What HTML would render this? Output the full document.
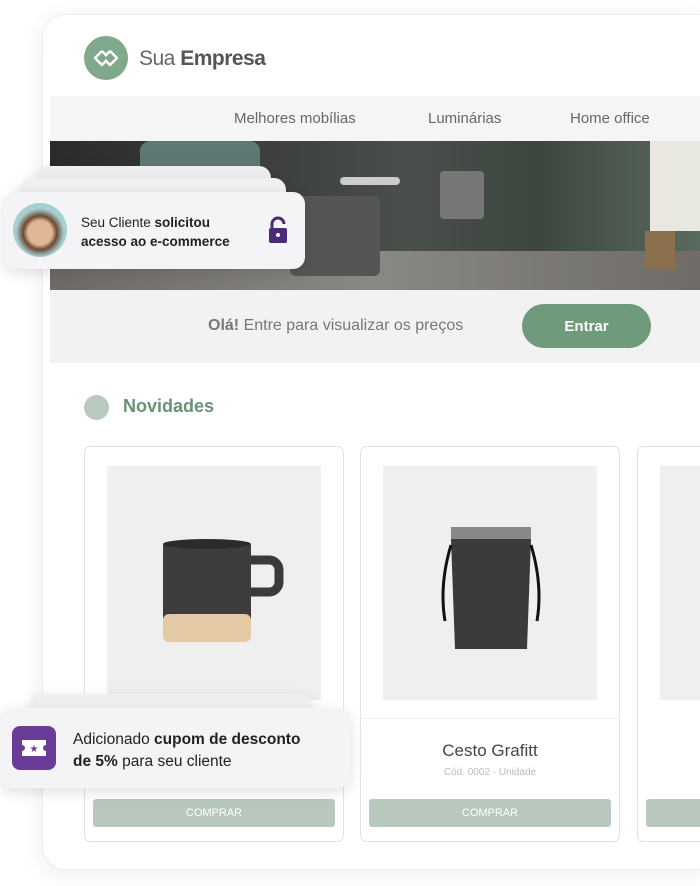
<!DOCTYPE html>
<html><head><meta charset="utf-8"><style>
*{margin:0;padding:0;box-sizing:border-box}
html,body{width:700px;height:886px;overflow:hidden}
body{background:#fff;font-family:"Liberation Sans",sans-serif}
#w{position:relative;width:700px;height:886px;overflow:hidden}
.abs{position:absolute}
.card{position:absolute;top:446px;width:260px;height:396px;border:1px solid #e3e3e3;border-radius:6px;background:#fff}
.img{position:absolute;left:22px;top:19px;width:214px;height:234px;background:#efefef}
.btn{position:absolute;left:8px;top:352px;width:242px;height:28px;background:#b8c8bc;border-radius:3px;color:#fff;font-size:11px;text-align:center;line-height:28px}
.notif{position:absolute;background:#f4f4f6;border-radius:12px;box-shadow:0 4px 14px rgba(0,0,0,.12)}
</style></head><body><div id="w">
<div class="abs" style="left:42px;top:14px;width:658px;height:856px;border-radius:24px 0 0 24px;background:#fff;box-shadow:0 4px 24px rgba(0,0,0,.08);border:1px solid #eee;border-right:none"></div>
<div class="abs" style="left:84px;top:36px;width:44px;height:44px;border-radius:50%;background:#7fa98a"></div>
<svg class="abs" style="left:92px;top:48px" width="28" height="20" viewBox="0 0 28 20"><path d="M10 3 L3 10 L10 17 L15 12 M18 3 L25 10 L18 17 L13 12 M10 3 L15 8 M18 3 L13 8" stroke="#fff" stroke-width="2.5" fill="none" stroke-linejoin="round"/></svg>
<div class="abs" style="left:139px;top:47px;font-size:21px;color:#666;letter-spacing:-0.5px">Sua <b style="color:#555">Empresa</b></div>
<div class="abs" style="left:50px;top:96px;width:650px;height:45px;background:#f5f5f5"></div>
<div class="abs" style="left:234px;top:110px;font-size:15px;color:#666">Melhores mobílias</div>
<div class="abs" style="left:428px;top:110px;font-size:15px;color:#666">Luminárias</div>
<div class="abs" style="left:570px;top:110px;font-size:15px;color:#666">Home office</div>
<div class="abs" style="left:50px;top:141px;width:650px;height:149px;background:linear-gradient(90deg,#2a2c2b 0%,#3a3d3b 30%,#4a4f4b 55%,#3c463f 75%,#5b6a5f 100%);overflow:hidden">
 <div class="abs" style="left:0;top:110px;width:650px;height:40px;background:linear-gradient(90deg,#6d6a66,#8a8884 50%,#6f6c68)"></div>
 <div class="abs" style="left:90px;top:0;width:120px;height:60px;background:#5f7874;border-radius:10px"></div>
 <div class="abs" style="left:240px;top:55px;width:90px;height:80px;background:#555;border-radius:6px"></div>
 <div class="abs" style="left:290px;top:36px;width:60px;height:8px;background:#ccc;border-radius:4px"></div>
 <div class="abs" style="left:390px;top:30px;width:44px;height:48px;background:#777;border-radius:4px"></div>
 <div class="abs" style="left:600px;top:0;width:50px;height:90px;background:#e8e8e0"></div>
 <div class="abs" style="left:595px;top:90px;width:30px;height:38px;background:#8c6f4d"></div>
</div>
<div class="abs" style="left:50px;top:290px;width:650px;height:73px;background:#f2f2f2"></div>
<div class="abs" style="left:208px;top:317px;font-size:16px;color:#777"><b>Olá!</b> Entre para visualizar os preços</div>
<div class="abs" style="left:522px;top:304px;width:129px;height:44px;border-radius:22px;background:#6f9a7c;color:#fff;font-size:15px;font-weight:bold;text-align:center;line-height:46px">Entrar</div>
<div class="abs" style="left:84px;top:395px;width:25px;height:25px;border-radius:50%;background:#b9c9bd"></div>
<div class="abs" style="left:123px;top:396px;font-size:18px;color:#6a9277;font-weight:bold">Novidades</div>
<div class="card" style="left:84px"><div class="img"></div>
 <svg class="abs" style="left:70px;top:85px" width="140" height="120" viewBox="0 0 140 120"><path d="M92 28 h22 a10 10 0 0 1 10 10 v12 a10 10 0 0 1 -10 10 h-22" stroke="#3a3a3a" stroke-width="9" fill="none"/><rect x="8" y="10" width="88" height="80" rx="4" fill="#3e3c3d"/><ellipse cx="52" cy="12" rx="44" ry="5" fill="#2c2b2b"/><rect x="8" y="82" width="88" height="28" rx="6" fill="#e4c9a5"/></svg>
 <div class="btn">COMPRAR</div></div>
<div class="card" style="left:360px"><div class="img"></div>
 <div class="abs" style="left:0;top:271px;width:258px;height:1px;background:#eee"></div>
 <svg class="abs" style="left:78px;top:78px" width="104" height="130" viewBox="0 0 104 130"><rect x="12" y="2" width="80" height="14" fill="#888"/><path d="M12 14 h80 l-4 110 h-72 z" fill="#3b3b3b"/><path d="M12 20 q-12 40 -6 76 M92 20 q12 40 6 76" stroke="#111" stroke-width="3" fill="none"/></svg>
 <div class="abs" style="left:0;top:294px;width:258px;text-align:center;font-size:17px;color:#444">Cesto Grafitt</div>
 <div class="abs" style="left:0;top:320px;width:258px;text-align:center;font-size:10px;color:#bbb">Cód. 0002 - Unidade</div>
 <div class="btn">COMPRAR</div></div>
<div class="card" style="left:637px;width:63px;border-right:none;border-radius:6px 0 0 6px"><div class="img" style="width:41px"></div><div class="btn" style="width:55px;border-radius:3px 0 0 3px"></div></div>
<div class="notif" style="left:38px;top:166px;width:233px;height:60px;background:#eeeef0"></div>
<div class="notif" style="left:20px;top:178px;width:266px;height:60px;background:#f0f0f2"></div>
<div class="notif" style="left:4px;top:192px;width:301px;height:77px"></div>
<div class="abs" style="left:13px;top:203px;width:54px;height:54px;border-radius:50%;background:radial-gradient(circle at 50% 55%,#e0b796 0 30%,#6b4a33 42%,#a8d0d0 60%)"></div>
<div class="abs" style="left:81px;top:213px;font-size:13.5px;line-height:19px;color:#222">Seu Cliente <b>solicitou<br>acesso ao e-commerce</b></div>
<svg class="abs" style="left:267px;top:216px" width="22" height="28" viewBox="0 0 22 28"><path d="M5 12 V8 a6 6 0 0 1 12 0" stroke="#4b2a7a" stroke-width="3" fill="none"/><rect x="2" y="12" width="18" height="15" rx="2" fill="#4b2a7a"/><circle cx="11" cy="19" r="2" fill="#fff"/></svg>
<div class="notif" style="left:30px;top:694px;width:282px;height:60px;background:#efeff1"></div>
<div class="notif" style="left:0;top:708px;width:350px;height:80px"></div>
<div class="abs" style="left:12px;top:726px;width:44px;height:44px;border-radius:8px;background:#6a3b97"></div>
<svg class="abs" style="left:20px;top:738px" width="28" height="20" viewBox="0 0 28 20"><path d="M2 2 h24 v5 a3 3 0 0 0 0 6 v5 h-24 v-5 a3 3 0 0 0 0 -6 z" fill="#fff"/><text x="14" y="14" font-size="10" text-anchor="middle" fill="#6a3b97">★</text></svg>
<div class="abs" style="left:73px;top:729px;font-size:15.5px;line-height:22px;color:#222">Adicionado <b>cupom de desconto<br>de 5%</b> para seu cliente</div>
</div></body></html>
